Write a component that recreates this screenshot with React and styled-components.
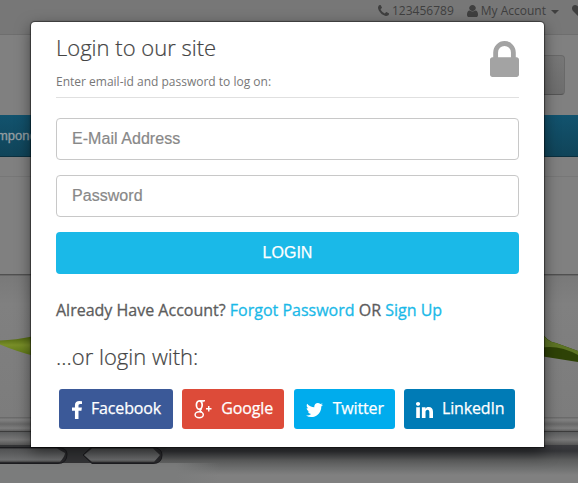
import React from "react";
import styled, { createGlobalStyle } from "styled-components";

const Global = createGlobalStyle`
  * { box-sizing: border-box; }
  body { margin: 0; overflow: hidden; font-family: "Open Sans", sans-serif; }
`;

const Page = styled.div`
  width: 578px;
  height: 483px;
  position: relative;
  overflow: hidden;
  display: flex;
  flex-direction: column;
  background: #808080;
`;
const TopBar = styled.div`
  height: 35px;
  flex: none;
  display: flex;
  justify-content: flex-end;
  align-items: flex-start;
  background: #777;
  border-bottom: 1px solid #6e6e6e;
  font-size: 12px;
  line-height: 20px;
  color: #3f3f3f;
  white-space: nowrap;
`;
const TopItem = styled.span`
  height: 21px;
  display: flex;
  align-items: center;
  gap: 3px;
  margin-right: ${(p) => p.$after}px;
`;
const Caret = styled.i`
  border: 4px solid transparent;
  border-top-color: #3f3f3f;
  border-bottom: 0;
  margin: 3px 0 0 2px;
`;
const Header = styled.div`
  height: 80px;
  flex: none;
  display: flex;
  justify-content: flex-end;
  padding: 20px 13px 0 0;
`;
const CartButton = styled.div`
  width: 140px;
  height: 40px;
  border: 1px solid #696969;
  border-bottom-color: #555;
  border-radius: 4px;
  background: linear-gradient(#777, #6d6d6d);
`;
const Nav = styled.nav`
  height: 42px;
  flex: none;
  background: linear-gradient(#12536e, #104459);
  border-bottom: 1px solid #0b303f;
  color: #949ea2;
  font: 13px/41px "Liberation Sans", sans-serif;
  -webkit-text-stroke: 0.3px #949ea2;
`;
const NavLabel = styled.span`
  display: block;
  margin-left: -3px;
`;
const Hero = styled.div`
  height: 326px;
  flex: none;
  padding-top: 19px;
`;
const Artwork = styled.svg`
  display: block;
`;
const Dialog = styled.form`
  position: absolute;
  left: 31px;
  top: 22px;
  width: 513px;
  height: 425px;
  padding: 0 25px;
  display: flex;
  flex-direction: column;
  background: #fff;
  border-radius: 4px 4px 0 0;
  box-shadow: 0 0 1px 1px rgba(0, 0, 0, 0.45), 0 5px 15px rgba(0, 0, 0, 0.5);
`;
const DialogHead = styled.header`
  height: 76px;
  flex: none;
  display: flex;
  justify-content: space-between;
  border-bottom: 1px solid #e0e0e0;
  margin-bottom: 20px;
`;
const Heading = styled.h3`
  margin: 0;
  padding-top: ${(p) => p.$top}px;
  font-size: 22px;
  line-height: 30px;
  font-weight: 300;
  color: #444;
  -webkit-text-stroke: 0.2px #444;
  white-space: nowrap;
`;
const Hint = styled.p`
  margin: 10px 0 0;
  font-size: 12px;
  line-height: 20px;
  color: #777;
`;
const LockSlot = styled.div`
  padding-top: 19px;
  color: #a3a3a3;
`;
const Field = styled.input`
  width: 100%;
  height: 42px;
  flex: none;
  margin: 0 0 15px;
  padding: 0 15px;
  border: 1px solid #c8c8c8;
  border-radius: 4px;
  font: 16px "Liberation Sans", sans-serif;
  letter-spacing: 0.05px;
  outline: none;
  &::placeholder { color: #888; opacity: 1; -webkit-text-stroke: 0.2px #888; }
`;
const Submit = styled.button`
  height: 42px;
  flex: none;
  border: 0;
  border-radius: 4px;
  background: #1ab9e8;
  color: #fff;
  font: 16px/42px "Liberation Sans", sans-serif;
  padding: 0;
  -webkit-text-stroke: 0.25px #fff;
`;
const Account = styled.p`
  margin: 24px 0 0;
  font-size: 16px;
  line-height: 24px;
  color: #5c5c5c;
  -webkit-text-stroke: 0.3px currentColor;
  white-space: nowrap;
`;
const Link = styled.a`
  color: #1ab9e8;
`;
const Socials = styled.div`
  display: flex;
  justify-content: space-between;
  width: 456px;
  margin: 18px 0 0 3px;
`;
const Social = styled.button`
  width: ${(p) => p.$width}px;
  height: 40px;
  border: 0;
  border-radius: 3px;
  background: ${(p) => p.$color};
  color: #fff;
  font: 16px/38px "Open Sans", sans-serif;
  padding: 0 0 0 ${(p) => p.$pad}px;
  display: flex;
  align-items: center;
  gap: ${(p) => p.$gap}px;
  white-space: nowrap;
  -webkit-text-stroke: 0.25px #fff;
`;
const SocialLabel = styled.span`
  height: 40px;
  letter-spacing: -0.15px;
`;
const Glyph = styled.svg`
  display: block;
  flex: none;
  fill: currentColor;
  overflow: visible;
  margin-top: ${(p) => p.$drop || 0}px;
`;

const paths = {
  phone: "M1600 1240q0 27-10 70.500t-21 68.500q-21 50-122 106-94 51-186 51-27 0-53-3.500t-57.500-12.500-47-14.500-55.500-20.500-49-18q-98-35-175-83-127-79-264-216t-216-264q-48-77-83-175-3-9-18-49t-20.500-55.500-14.500-47-12.500-57.500-3.500-53q0-92 51-186 56-101 106-122 25-11 68.500-21t70.500-10q14 0 21 3 18 6 53 76 11 19 30 54t35 63.500 31 53.500q3 4 17.500 25t21.500 35.500 7 28.500q0 20-28.500 50t-62 55-62 53-28.500 46q0 9 5 22.500t8.500 20.500 14 24 11.500 19q76 137 174 235t235 174q2 1 19 11.500t24 14 20.500 8.500 22.500 5q18 0 46-28.500t53-62 55-62 50-28.500q14 0 28.500 7t35.500 21.500 25 17.500q25 15 53.500 31t63.500 35 54 30q70 35 76 53 3 7 3 21z",
  user: "M1536 1399q0 109-62.500 187t-150.500 78h-854q-88 0-150.500-78t-62.500-187q0-85 8.500-160.500t31.500-152 58.500-131 94-89 134.500-34.500q131 128 313 128t313-128q76 0 134.500 34.500t94 89 58.500 131 31.500 152 8.500 160.500zm-256-887q0 159-112.500 271.500t-271.500 112.500-271.500-112.500-112.500-271.500 112.500-271.500 271.500-112.500 271.500 112.500 112.500 271.500z",
  lock: "M320 768h512v-192q0-106-75-181t-181-75-181 75-75 181v192zm832 96v576q0 40-28 68t-68 28h-960q-40 0-68-28t-28-68v-576q0-40 28-68t68-28h32v-192q0-184 132-316t316-132 316 132 132 316v192h32q40 0 68 28t28 68z",
  facebook: "M1343 12v264h-157q-86 0-116 36t-30 108v189h293l-39 296h-254v759h-306v-759h-255v-296h255v-218q0-186 104-288.500t277-102.500q147 0 228 12z",
  twitter: "M1684 408q-67 98-162 167 1 14 1 42 0 130-38 259.500t-115.500 248.500-184.500 210.500-258 146-323 54.500q-271 0-496-145 35 4 78 4 225 0 401-138-105-2-188-64.500t-114-159.500q33 5 61 5 43 0 85-11-112-23-185.500-111.500t-73.500-205.500v-4q68 38 146 41-66-44-105-115t-39-154q0-88 44-163 121 149 294.500 238.500t371.500 99.500q-8-38-8-74 0-134 94.500-228.500t228.500-94.500q140 0 236 102 109-21 205-78-37 115-142 178 93-10 186-50z",
  linkedin: "M477 625v991h-330v-991h330zm21-306q1 73-50.500 122t-135.500 49h-2q-82 0-132-49t-50-122q0-74 51.500-122.500t134.500-48.500 133 48.500 51 122.500zm1166 729v568h-329v-530q0-105-40.500-164.500t-126.500-59.500q-63 0-105.500 34.500t-63.500 85.500q-11 30-11 81v553h-329q2-399 2-647t-1-296l-1-48h329v144h-2q20-32 41-56t56.500-52 87-43.500 114.500-15.500q171 0 275 113.500t104 332.500z",
  heart: "M896 1664q-26 0-44-18l-624-602q-10-8-27.500-26t-55.500-65.500-68-97.500-53.500-121-23.500-138q0-220 127-344t351-124q62 0 126.500 21.500t120 58 95.500 68.500 76 68q36-36 76-68t95.500-68.500 120-58 126.500-21.500q224 0 351 124t127 344q0 221-229 450l-623 600q-18 18-44 18z",
};

function Icon({ name, box, w, h, drop }) {
  return (
    <Glyph viewBox={box} width={w} height={h} $drop={drop} preserveAspectRatio="none">
      <path d={paths[name]} />
    </Glyph>
  );
}

function GooglePlus() {
  return (
    <Glyph width="18" height="19" viewBox="0 0 18 19" $drop={1}>
      <g fill="none" stroke="currentColor">
        <ellipse cx="5.300" cy="5" rx="2.900" ry="4.200" strokeWidth="1.700" />
        <path d="M5.500 .6H11L9.300 1.700H7.300" strokeWidth="1" />
        <path d="M7.500 8.500C5.300 10.200 6 10.900 7.700 12.100" strokeWidth="1.700" />
        <ellipse cx="5.200" cy="14.700" rx="4.100" ry="3" strokeWidth="1.500" />
        <path d="M12 8.800h5.500M14.750 6v5.600" strokeWidth="1.400" />
      </g>
    </Glyph>
  );
}

function LaptopArtwork() {
  return (
    <Artwork width="578" height="307" viewBox="0 176 578 307">
      <defs>
        <linearGradient id="screen" x2="0" y2="1">
          <stop stopColor="#797979" /><stop offset=".2" stopColor="#808080" /><stop offset="1" stopColor="#7c7c7c" />
        </linearGradient>
        <linearGradient id="rim" x2="0" y2="1">
          <stop stopColor="#666" /><stop offset=".2" stopColor="#818181" /><stop offset=".5" stopColor="#686868" /><stop offset=".8" stopColor="#7d7d7d" /><stop offset="1" stopColor="#606060" />
        </linearGradient>
        <linearGradient id="base" x2="0" y2="1">
          <stop stopColor="#5c5d5e" /><stop offset=".6" stopColor="#777" /><stop offset="1" stopColor="#555" />
        </linearGradient>
        <linearGradient id="edge" x2="0" y2="1">
          <stop stopColor="#3c3c40" /><stop offset=".2" stopColor="#343538" /><stop offset=".5" stopColor="#5b5c5c" /><stop offset=".85" stopColor="#747575" /><stop offset="1" stopColor="#808080" />
        </linearGradient>
        <linearGradient id="pill" x2="0" y2="1">
          <stop stopColor="#505152" /><stop offset=".85" stopColor="#6c6d6e" /><stop offset="1" stopColor="#444" />
        </linearGradient>
        <linearGradient id="under" x2="1" y2="0">
          <stop offset=".8" stopColor="#7b7c7c" /><stop offset="1" stopColor="#7b7c7c" stopOpacity="0" />
        </linearGradient>
        <linearGradient id="leaf" x2="0" y2="1">
          <stop stopColor="#495f0c" /><stop offset=".45" stopColor="#788e28" /><stop offset="1" stopColor="#5b7513" />
        </linearGradient>
      </defs>
      <path d="M0 176.500h578" stroke="#777" />
      <rect y="276" width="578" height="141" fill="url(#screen)" />
      <path d="M0 274.800h578" stroke="#505050" strokeWidth="1.500" />
      <path d="M0 340.500Q15 340 35 336V356Q18 352 0 344.500Z" fill="url(#leaf)" />
      <path d="M540 330Q547 342 556 343L578 351V362L540 356Z" fill="#2e4206" />
      <path d="M540 331Q547 342 556 343L578 351V355Q558 344 540 348Z" fill="#5d7424" />
      <rect y="417" width="578" height="14" fill="url(#rim)" />
      <path d="M0 431.500h578" stroke="#3c3c3c" />
      <rect y="432" width="578" height="13" fill="url(#base)" />
      <rect y="445" width="578" height="30" fill="url(#edge)" />
      <rect y="463" width="220" height="20" fill="url(#under)" />
      <path d="M0 445H170L150 463H0Z" fill="#333436" />
      <path d="M-2 447.500H57Q67 447.500 67 454Q67 463.500 58 463.500H-2Z" fill="#29292c" stroke="#1b1b1e" />
      <path d="M-2 448.500H57L65 453Q65 456 60 462H-2Z" fill="url(#pill)" />
      <path d="M83 455L91 447.500H153Q162 448 162 455Q162 463.500 153 463.500H92Z" fill="#29292c" stroke="#1b1b1e" />
      <path d="M84 455L92 448.500H153L160 455L154 462H92Z" fill="url(#pill)" />
    </Artwork>
  );
}

export default function App() {
  return (
    <>
      <Global />
      <Page>
        <TopBar>
          <TopItem $after={13}><Icon name="phone" box="192 128 1408 1408" w="11" h="11" />123456789</TopItem>
          <TopItem $after={13}><Icon name="user" box="256 128 1280 1536" w="11" h="12" />My Account<Caret /></TopItem>
          <TopItem $after={-6}><Icon name="heart" box="0 128 1792 1536" w="12" h="11" drop={-1} /></TopItem>
        </TopBar>
        <Header><CartButton /></Header>
        <Nav><NavLabel>mponents</NavLabel></Nav>
        <Hero><LaptopArtwork /></Hero>
        <Dialog onSubmit={(e) => e.preventDefault()}>
          <DialogHead>
            <div>
              <Heading $top={10}>Login to our site</Heading>
              <Hint>Enter email-id and password to log on:</Hint>
            </div>
            <LockSlot><Icon name="lock" box="0 128 1152 1408" w="29" h="36" /></LockSlot>
          </DialogHead>
          <Field type="email" placeholder="E-Mail Address" />
          <Field type="password" placeholder="Password" />
          <Submit>LOGIN</Submit>
          <Account>Already Have Account? <Link>Forgot Password</Link> OR <Link>Sign Up</Link></Account>
          <Heading $top={19}>...or login with:</Heading>
          <Socials>
            <Social type="button" $width={114} $color="#3b5998" $pad={13} $gap={9}>
              <Icon name="facebook" box="479 0 864 1664" w="10" h="18" drop={1} /><SocialLabel>Facebook</SocialLabel>
            </Social>
            <Social type="button" $width={102} $color="#dd4b39" $pad={12} $gap={9}>
              <GooglePlus /><SocialLabel>Google</SocialLabel>
            </Social>
            <Social type="button" $width={101} $color="#00aced" $pad={12} $gap={10}>
              <Icon name="twitter" box="108 256 1576 1280" w="17" h="14" drop={1} /><SocialLabel>Twitter</SocialLabel>
            </Social>
            <Social type="button" $width={111} $color="#007bb6" $pad={12} $gap={9}>
              <Icon name="linkedin" box="128 148 1536 1468" w="17" h="16" drop={1} /><SocialLabel>LinkedIn</SocialLabel>
            </Social>
          </Socials>
        </Dialog>
      </Page>
    </>
  );
}
